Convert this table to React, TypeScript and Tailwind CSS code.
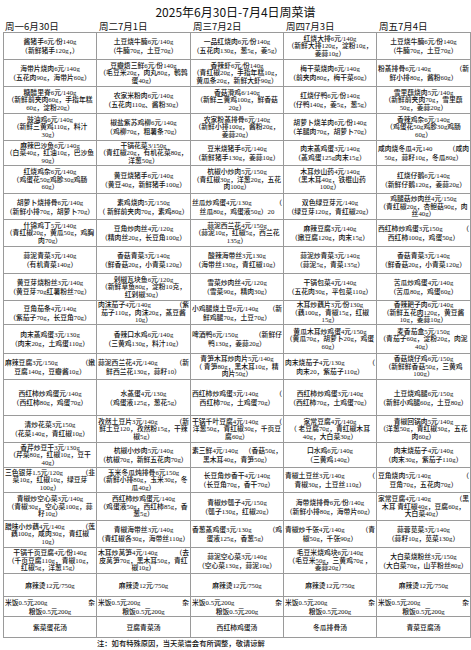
import React from "react";

const headers = ["周一6月30日", "周二7月1日", "周三7月2日", "周四7月3日", "周五7月4日"];

const rowH = [
  "h-[27px]", "h-[27px]", "h-[27px]", "h-[27px]", "h-[25px]", "h-[28px]", "h-[26px]", "h-[27px]",
  "h-[27px]", "h-[27px]", "h-[24px]", "h-[29px]", "h-[26px]", "h-[36px]", "h-[27px]", "h-[25px]",
  "h-[25px]", "h-[28px]", "h-[27px]", "h-[26px]", "h-[23px]", "h-[20px]", "h-[21px]",
];

const colW = ["w-[93px]", "w-[94px]", "w-[93px]", "w-[93px]", "w-[94px]"];

const cols: string[][] = [
  [
    "酱猪手6元/份140g\n（新鲜猪手120g，）",
    "海带片烧肉6元/140g\n（五花肉90g，海带片60g）",
    "糖醋里脊6元/140g\n（新鲜前夹肉60g，手指年糕\n60g，淀粉20g）",
    "豉油鸡6元/140g\n（新鲜三黄鸡110g，料汁\n30g）",
    "麻辣巴沙鱼6元/140g\n（白菜40g，红油10g，巴沙鱼\n90g）",
    "红烧鸡杂6元/140g\n（鸡蛋花50g鸡胗30g鸡肠\n60g）",
    "胡萝卜烧排骨6元/140g\n（新鲜小排70g，胡萝卜70g）",
    "什锦鸡丁5元/140g\n（青红椒20g，黄瓜50g，鸡胸\n肉70g）",
    "蒜泥青菜3元/140g\n（有机青菜140g）",
    "黄豆芽烧粉丝3元/140g\n（黄豆芽70g红薯粉丝70g）",
    "豆角茄条4元/140g\n（紫茄子70g，长豆角70g）",
    "肉末蒸鸡蛋3元/130g\n（肉末20g，土鸡蛋110g）",
    "麻辣豆腐3元/150g|（嫩\n豆腐140g，豆瓣酱10g）",
    "西红柿炒鸡蛋元/140g\n（西红柿80g，鸡蛋70g）",
    "清炒花菜3元150g\n（花菜140g，青红椒10g）",
    "香芹炒豆干3元/130g\n（芹菜80g，红椒10g，豆干\n40g）",
    "三色银芽1.5元/120g|（韭\n菜10g，红椒10g，绿豆芽\n100g）",
    "青椒炒空心菜3元/140g\n（青椒30g，空心菜100g，蒜\n籽10g）",
    "腊味小炒藕4元/140g|（莲\n藕100g，咸肉30g，青红椒\n10g）",
    "干锅千页豆腐4元/份140g\n（千页豆腐110g，青椒10g，\n红椒5g，洋葱15g）",
    "麻辣烫12元/750g",
    "米饭0.5元200g|杂\n粮饭0.5元200g",
    "紫菜蛋花汤",
  ],
  [
    "土豆烧牛腩6元/140g\n（牛腩70g，土豆70g）",
    "豆瓣焐三鲜6元/份140g\n（毛豆米20g，肉丸80g，鹌鹑\n蛋40g）",
    "农家米粉肉6元/140g\n（五花肉110g、酱粉30g）",
    "椒盐紫苏鸡柳6元/140g\n（鸡柳70g，粗薯条70g）",
    "干锅花菜3/150g\n（青红椒20g，有机花菜80g，\n洋葱50g）",
    "黄豆烧猪手6元/140g\n（黄豆40g，新鲜猪手100g）",
    "素鸡烧肉5元/150g\n（ 新鲜前夹肉70g，素鸡80g）",
    "豆角炒肉丝4元/120g\n（精肉丝20g，长豆角100g）",
    "香菇青菜3元/140g\n（鲜香菇20g，小青菜120g）",
    "剁椒瓦块鱼6元/120g\n（新鲜草鱼80g，淀粉10克，\n红剁椒30g）",
    "肉沫茄子4元/140g|（紫\n茄子110g，肉沫20g，蒸豆酱\n10g）",
    "香辣口水鸡6元/140g\n（三黄鸡130g，料汁10g）",
    "蒜泥西兰花4元/140g|（新\n鲜西兰花130g，蒜籽10）",
    "水蒸蛋4元/130g\n（鸡蛋液125g，葱花5g）",
    "孜然土豆片3元/140g|（新\n鲜土豆120，孜然粉15g，干辣\n椒5g）",
    "杭椒小炒肉5元/140g\n（杭椒70g，新鲜五花肉70g）",
    "玉米冬瓜炖排骨6元150g\n（新鲜小排80g，玉米30g，冬\n瓜40g）",
    "西红柿炒鸡蛋元/140g\n（鸡蛋液50g，西红柿85g，香\n葱5g）",
    "青椒海带丝3元/140g\n（青红椒各30g，海带丝110g）",
    "木耳炒莴笋4元/140g|（去\n皮莴笋70g，黑木耳50g，青红\n椒10g）",
    "麻辣烫12元/750g",
    "米饭0.5元200g|杂\n粮饭0.5元200g",
    "豆腐青菜汤",
  ],
  [
    "一品红烧肉6元/份140g\n（五花肉130g，葱5g，姜5g）",
    "香辣虾6元/份140g\n（青红椒20g，手指年糕10g，\n黄瓜条20g，新鲜大虾90g）",
    "香菇滑鸡6/140g\n（新鲜三黄鸡100g，鲜香菇\n20g）",
    "农家粉蒸排骨6元/140g\n（新鲜小排100g，酱粉20g，\n姜蒜20g）",
    "豆米烧猪手6元/140g\n（新鲜猪手130g，姜蒜10g）",
    "杭椒小炒肉5元/150g\n（青红椒30g，洋葱20g，五花\n肉100g）",
    "丝瓜炒鸡蛋4元/130g|（\n丝瓜80g，鸡蛋液50g）20",
    "蒜泥西兰花4元/150g\n（蒜泥10g，红椒5g，西兰花\n135g）",
    "酸辣海带丝3元130g\n（海带丝130g，青红椒10g）",
    "雪菜炒肉丝4元/120g\n（雪菜90g，精肉30g）",
    "小鸡腿烧土豆6元/140g|（新\n鲜鸡腿70g，土豆70g）",
    "啤酒鸭6元/150g|（新鲜仔\n鸭130g，姜蒜20g）",
    "青笋木耳炒肉片5元/140g\n（ 青笋80g，黑木耳10g，精\n肉片50g）",
    "西红柿炒鸡蛋3元/140g|（\n西红柿70g，土鸡蛋70g）",
    "干锅千叶豆腐4元/140g|（\n洋葱50g，青红椒30g，千页豆\n腐60g）",
    "素三鲜4元/140g|（香菇50g，\n黑木耳40g，青笋50g）",
    "长豆角炒香干4元/140g\n（长豆角70g，香干70g）",
    "青椒炒瓠子4元/150g\n（瓠子130g，红椒20g）",
    "香葱蒸鸡蛋3元/130g|（鸡\n蛋液125g，香葱5g）",
    "蒜泥空心菜3元/140g\n（空心菜130g，蒜泥10g）",
    "麻辣烫12元/750g",
    "米饭0.5元200g|杂\n粮饭0.5元200g",
    "西红柿鸡蛋汤",
  ],
  [
    "红烧大排6元/140g\n（新鲜大排120g，淀粉10g，\n姜蒜10g）",
    "梅干菜烧肉6元/140g\n（前夹肉80g，梅干菜60g）",
    "红烧仔鸭6元/份140g\n（仔鸭140g，姜5g，葱5g）",
    "胡萝卜烧羊肉6元/份140g\n（羊腿肉70g，胡萝卜70g）",
    "肉末蒸鸡蛋3元/140g\n（蒸鸡蛋125g肉末15g）",
    "木耳炒山药4元/140g\n（黑木耳40g，铁棍山药\n100g）",
    "双色绿豆芽元/140g\n（绿豆芽120g，青红椒20g）",
    "麻辣豆腐3元/140g\n（嫩豆腐120g，肉末15g）",
    "蒜泥炒青菜3元/140g\n（蒜泥5g，青菜135g）",
    "干锅包菜4元/140g\n（五花肉30g，平包菜110g）",
    "木耳炒藕片3元/份130g\n（藕100g，青椒15g，红椒\n15g）",
    "黄瓜木耳炒鸡蛋4元/150g\n（黄瓜70g，胡萝卜20g，鸡蛋\n60g）",
    "肉末烧茄子4元/130g|（\n肉末20，紫茄子110g）",
    "西红柿炒鸡蛋3元/140g\n（西红柿70g，土鸡蛋70g）",
    "家常豆腐4元/140g\n（ 老豆腐70g，青红椒木耳\n40g，大白菜30g）",
    "口水鸡6元/140g\n（三黄鸡140g）",
    "青椒土豆丝3元/140g|（\n青椒30g，土豆丝110g）",
    "海带烧排骨6元/份/140g\n（新鲜小排80g，海带片60g）",
    "青椒炒千张4元/140g|（青\n椒50g，千张90g）",
    "毛豆米烧鸡块6元/140g\n（毛豆米50g，三黄鸡70g ，\n姜蒜20g）",
    "麻辣烫12元/750g",
    "米饭0.5元200g|杂\n粮饭0.5元200g",
    "冬瓜排骨汤",
  ],
  [
    "土豆烧牛腩6元/份140g\n（牛腩70g，土豆70g）",
    "粉蒸排骨6元/140g|（新\n鲜小排80g，酱粉60g）",
    "雪里蕻烧肉5元/140g\n（新鲜前夹肉70g，雪里蕻\n50g，姜蒜20g）",
    "香辣鸡杂6元/140g\n（鸡蛋花50g鸡胗30g鸡肠\n60g）",
    "咸肉烧冬瓜4元140|（咸肉\n50g，蒜籽10g，冬瓜80g）",
    "红烧仔鹅6元/140g\n（新鲜仔鹅120g，姜蒜20g）",
    "鸡腿菇炒肉丝4元/150g\n（青红椒20g，杏鲍菇90g，肉\n丝40g）",
    "西红柿炒鸡蛋3元150g|（\n西红柿100g，鸡蛋50g）",
    "香菇青菜3元/140g\n（鲜香菇20g，小青菜120g）",
    "苦瓜炒鸡蛋4元/140g\n（苦瓜80g，鸡蛋60g）",
    "香辣耙子肉6元/140g\n（新鲜五花肉120g，黄豆酱\n10g，姜蒜10g）",
    "麦香茄盒5元/150g\n（青茄子60g，淀粉20g，肉泥\n40g）",
    "香菇烧仔鸡6元/150g\n（新鲜鲜香菇50g，三黄鸡\n100g）",
    "土豆烧鸡腿6元/150g\n（新鲜小鸡腿60g，土豆80g）",
    "青椒回锅肉5元/140g\n（洋葱50g，青红椒30g，五花\n肉60g）",
    "肉末烧茄子4元/140g\n（肉末30g，紫茄子110g）",
    "豆角烧肉5元/140g|（\n豆角70g，五花肉70g）",
    "家常豆腐4元/140g|（黑\n木耳 青红椒40g，豆腐60g，\n大白菜40g）",
    "蒜蓉苋菜3元/140g\n（蒜籽10g，苋菜130g）",
    "大白菜烧粉丝3元/150g\n（大白菜70g，山芋粉丝80g）",
    "麻辣烫12元/750g",
    "米饭0.5元200g|杂\n粮饭0.5元200g",
    "青菜豆腐汤",
  ],
];

function Cell({ text, w }: { text: string; w: string }) {
  const lines = text.split("\n");
  const lead = lines.length >= 3 ? "leading-[7.5px]" : "leading-[9px]";
  return (
    <div
      className={`${w} h-full shrink-0 border-r border-b border-[#9a9a9a] flex flex-col justify-center items-stretch text-center overflow-visible ${lead}`}
    >
      {lines.map((l, i) => {
        if (l.includes("|")) {
          const [a, b] = l.split("|");
          return (
            <div key={i} className="flex justify-between whitespace-nowrap px-[1px]">
              <span>{a}</span>
              <span>{b}</span>
            </div>
          );
        }
        return (
          <div key={i} className="whitespace-nowrap">
            {l}
          </div>
        );
      })}
    </div>
  );
}

export default function App() {
  return (
    <div className="w-[471px] h-[650px] bg-white text-[#111] font-['Noto_Sans_CJK_SC',sans-serif] overflow-hidden">
      <div className="h-[20px] pt-[3px] text-[12px] leading-[17px] text-center text-[#111]">
        2025年6月30日-7月4日周菜谱
      </div>
      <div className="ml-[3px] h-[12px] flex">
        {headers.map((h, i) => (
          <div key={i} className={`${colW[i]} ${i === 0 ? "pl-[2px]" : "pl-[3px]"} text-[9.5px] leading-[12px] text-[#111] whitespace-nowrap`}>
            {h}
          </div>
        ))}
      </div>
      <div className="ml-[3px] w-[468px] border-l border-t border-[#9a9a9a] font-['Liberation_Serif','Noto_Sans_CJK_SC',serif] font-medium text-[6.8px]">
        {rowH.map((h, r) => (
          <div key={r} className={`flex ${h}`}>
            {cols.map((c, ci) => (
              <Cell key={ci} text={c[r]} w={colW[ci]} />
            ))}
          </div>
        ))}
      </div>
      <div className="pl-[97px] pt-[1px] text-[7.3px] leading-[10px] font-medium font-['Liberation_Serif','Noto_Sans_CJK_SC',serif] whitespace-nowrap">
        注：如有特殊原因，当天菜谱会有所调整，敬请谅解
      </div>
    </div>
  );
}
